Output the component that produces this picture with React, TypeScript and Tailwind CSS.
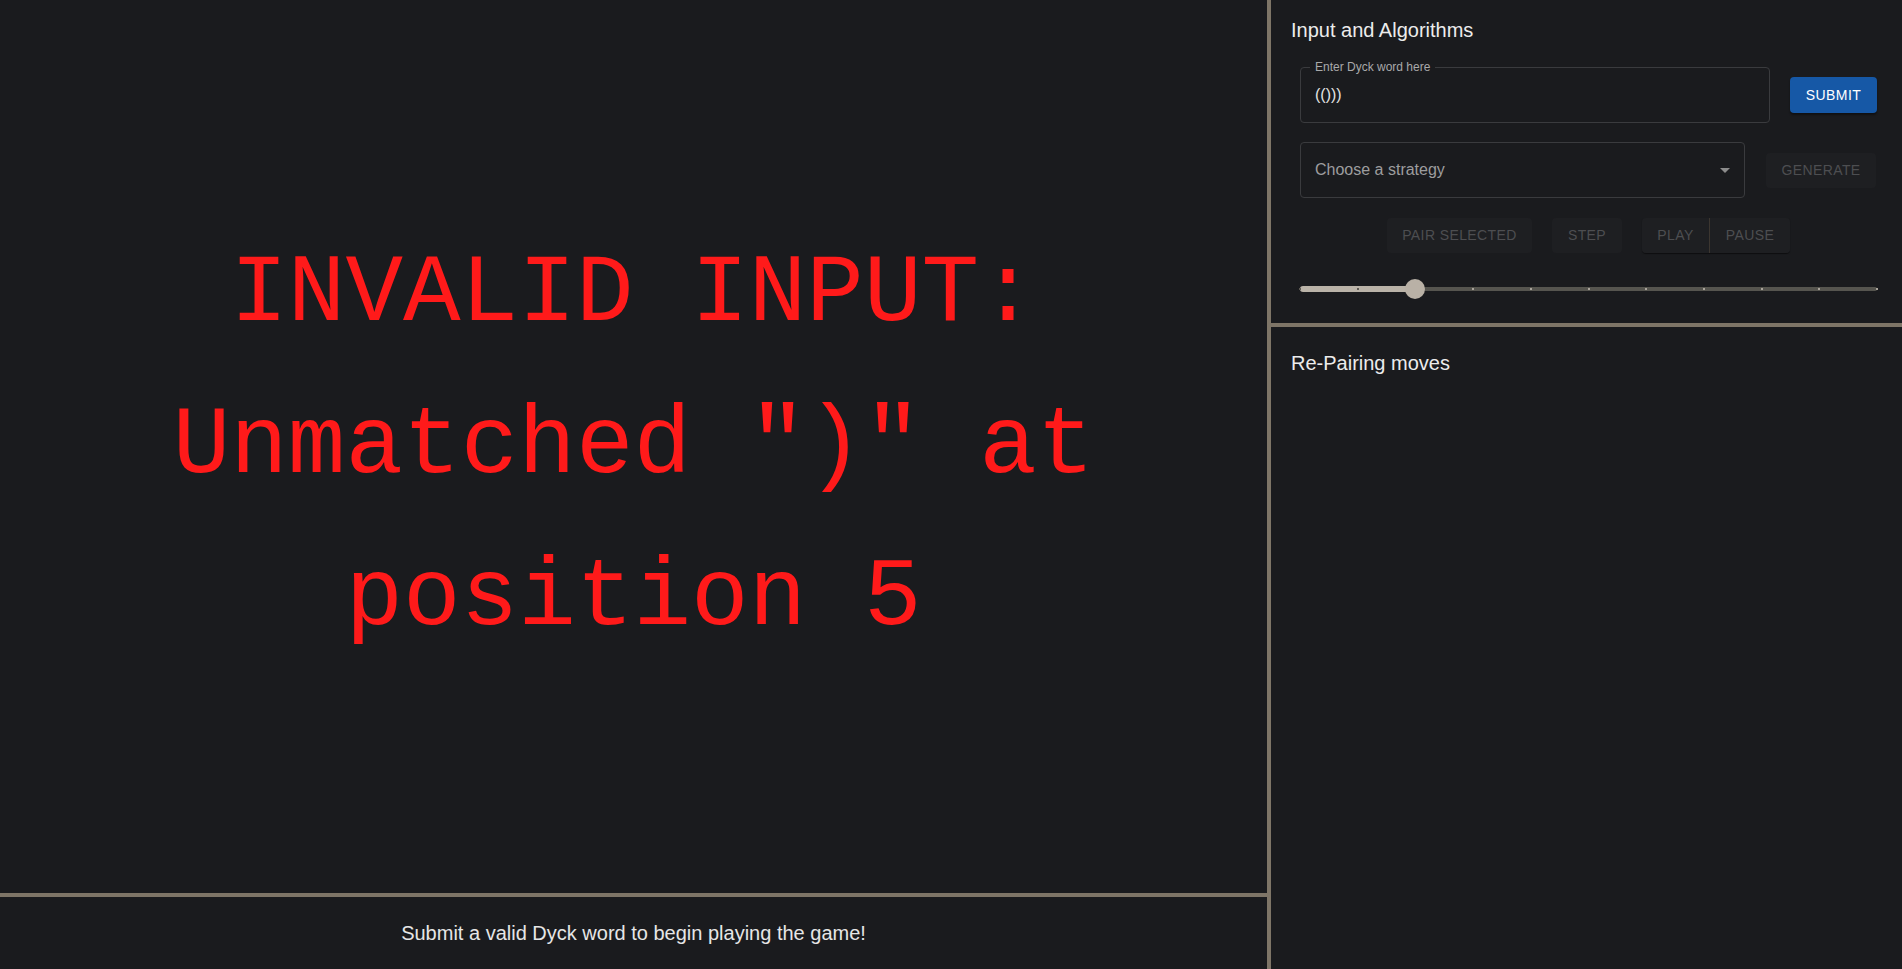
import React from 'react'

const STEPS = 10
const VALUE = 2

function ArrowDropDown() {
  return (
    <svg viewBox="0 0 24 24" className="h-6 w-6 fill-[#8c8c8c]">
      <path d="M7 10l5 5 5-5z" />
    </svg>
  )
}

function OutlinedField({ label, value }: { label: string; value: string }) {
  return (
    <div className="relative h-14 w-[470px] rounded-[4px] border border-[#3a3b3e]">
      <span className="absolute -top-[9px] left-[9px] bg-[#1a1b1e] px-[5px] text-[12px] leading-[16px] text-[#a9a9aa]">
        {label}
      </span>
      <div className="flex h-full items-center px-[14px] text-[16px] text-[#e3e3e3]">{value}</div>
    </div>
  )
}

function StrategySelect() {
  return (
    <div className="flex h-14 w-[445px] items-center justify-between rounded-[4px] border border-[#3a3b3e] pl-[14px] pr-[7px]">
      <span className="text-[16px] text-[#9d9d9e]">Choose a strategy</span>
      <ArrowDropDown />
    </div>
  )
}

function DisabledButton({ children, className = '' }: { children: React.ReactNode; className?: string }) {
  return (
    <button
      disabled
      className={`flex h-[35px] items-center justify-center whitespace-nowrap rounded-[4px] bg-[#1e1f22] text-[14px] font-medium tracking-[0.4px] text-[#4d4e51] ${className}`}
    >
      {children}
    </button>
  )
}

function StepSlider() {
  const pct = (VALUE / STEPS) * 100
  return (
    <div className="relative mt-[26px] ml-[29px] mr-[25px] h-5">
      <div className="absolute top-[8px] left-0 right-0 h-1 rounded-full bg-[#56554f]" />
      <div
        className="absolute top-[7px] left-0 h-[6px] rounded-full bg-[#bab3a8]"
        style={{ width: `${pct}%` }}
      />
      {Array.from({ length: STEPS + 1 }, (_, i) => (
        <span
          key={i}
          className={`absolute top-[9px] h-[2px] w-[2px] -translate-x-1/2 ${i <= VALUE ? 'bg-[#5e5a53]' : 'bg-[#a9a49b]'}`}
          style={{ left: `${(i / STEPS) * 100}%` }}
        />
      ))}
      <span
        className="absolute top-0 h-5 w-5 -translate-x-1/2 rounded-full bg-[#b9b1a6]"
        style={{ left: `${pct}%` }}
      />
    </div>
  )
}

export default function App() {
  return (
    <div className="flex h-[969px] w-full bg-[#1a1b1e] font-['Liberation_Sans',Arial,sans-serif]">
      <div className="flex w-[1267px] flex-col">
        <div className="flex flex-1 items-center justify-center px-[150px] text-center">
          <p className="font-['Liberation_Mono','Courier_New',monospace] text-[96px] leading-[152px] text-[#ff1a1a]">
            INVALID INPUT: Unmatched ")" at position 5
          </p>
        </div>
        <div className="flex h-[76px] items-center justify-center border-t-4 border-[#7e7567] text-[20px] text-[#e6e6e6]">
          Submit a valid Dyck word to begin playing the game!
        </div>
      </div>

      <div className="flex w-[635px] flex-col border-l-4 border-[#7e7567]">
        <section className="h-[327px] border-b-4 border-[#7e7567] pt-[14px]">
          <h2 className="pl-5 text-[20px] leading-8 text-[#ececec]">Input and Algorithms</h2>

          <div className="mt-[21px] ml-[29px] flex items-center gap-5">
            <OutlinedField label="Enter Dyck word here" value="(()))" />
            <button className="h-9 w-[87px] rounded-[4px] bg-[#1658a6] text-[14px] font-medium tracking-[0.4px] text-white shadow-[0_2px_2px_rgba(0,0,0,0.4)]">
              SUBMIT
            </button>
          </div>

          <div className="mt-[19px] ml-[29px] flex items-center gap-[21px]">
            <StrategySelect />
            <DisabledButton className="h-9 w-[110px]">GENERATE</DisabledButton>
          </div>

          <div className="mt-5 ml-[29px] mr-[25px] flex justify-center gap-5">
            <DisabledButton className="w-[145px]">PAIR SELECTED</DisabledButton>
            <DisabledButton className="w-[70px]">STEP</DisabledButton>
            <div className="flex rounded-[4px] shadow-[0_1px_1px_rgba(0,0,0,0.5)]">
              <DisabledButton className="w-[68px] rounded-r-none border-r border-[#3c3630]">PLAY</DisabledButton>
              <DisabledButton className="w-[80px] rounded-l-none">PAUSE</DisabledButton>
            </div>
          </div>

          <StepSlider />
        </section>

        <section className="flex-1 pt-5">
          <h2 className="pl-5 text-[20px] leading-8 text-[#ececec]">Re-Pairing moves</h2>
        </section>
      </div>
    </div>
  )
}
